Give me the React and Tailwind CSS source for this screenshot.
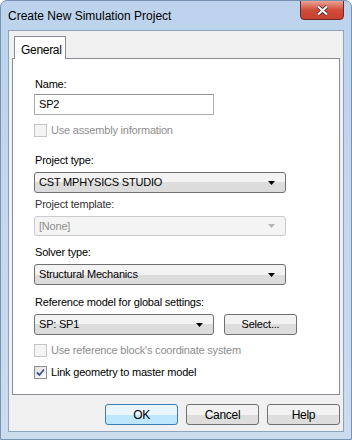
import React from 'react';

const font = { fontFamily: '"Liberation Sans", Arial, sans-serif' };

const Arrow = ({ disabled }) => (
    <svg width="7" height="4" viewBox="0 0 7 4" className="shrink-0">
        <path d="M0 0 H7 L3.5 4 Z" fill={disabled ? '#b5b5b5' : '#000'} />
    </svg>
);

const Combo = ({ value, className = '', disabled }) =>
    disabled ? (
        <div className={`flex items-center justify-between h-[20px] pl-[4px] pr-[10px] border border-[#c9cbcd] rounded-[3px] bg-[#f4f4f4] text-[#8d8d8d] ${className}`}>
            <span>{value}</span>
            <Arrow disabled />
        </div>
    ) : (
        <div className={`flex items-center justify-between h-[21px] pl-[4px] pr-[10px] border border-[#707070] rounded-[3px] bg-gradient-to-b from-[#f3f3f3] from-50% to-[#dcdcdc] to-50% text-black ${className}`}>
            <span>{value}</span>
            <Arrow />
        </div>
    );

const Checkbox = ({ label, checked, disabled }) => (
    <div className="flex items-center h-[16px]">
        <div className={`w-[13px] h-[13px] border flex items-center justify-center ${disabled ? 'border-[#c4c4c4] bg-[#f4f4f4]' : 'border-[#8e8f8f] bg-gradient-to-br from-[#dedede] to-[#ffffff]'}`}>
            {checked && (
                <svg width="9" height="9" viewBox="0 0 9 9">
                    <path d="M1 4.5 L3.5 7 L8 1.5" stroke="#3d4f8a" strokeWidth="1.8" fill="none" />
                </svg>
            )}
        </div>
        <span className={`ml-[4px] ${disabled ? 'text-[#8d8d8d]' : 'text-black'}`}>{label}</span>
    </div>
);

const Button = ({ children, primary, className = '' }) => (
    <div className={`h-[21px] w-[73px] flex items-center justify-center rounded-[3px] border ${primary ? 'border-[#3c7fb1] bg-gradient-to-b from-[#eaf6fd] from-50% to-[#bee6fd] to-50%' : 'border-[#707070] bg-gradient-to-b from-[#f2f2f2] from-50% to-[#dddddd] to-50%'} ${className}`}>
        {children}
    </div>
);

const Label = ({ children, className = '' }) => (
    <div className={`h-[16px] leading-[16px] pl-[1px] ${className}`}>{children}</div>
);

export default function App() {
    return (
        <div style={font} className="w-[352px] h-[440px] text-[11px] tracking-[-0.2px] text-black bg-gradient-to-b from-[#bdd3ed] to-[#cbdcef] border border-[#7892b2] rounded-t-[7px] flex flex-col overflow-hidden">
            {/* title bar */}
            <div className="h-[29px] flex items-start relative">
                <span className="ml-[7px] mt-[6px] text-[12px] tracking-normal text-black">Create New Simulation Project</span>
                <div className="absolute right-[7px] top-[-1px] w-[44px] h-[20px] rounded-b-[4px] border border-[#6d2a26] bg-gradient-to-b from-[#e8a394] via-[#cf4b3a] to-[#c8412f] flex items-center justify-center">
                    <svg width="13" height="11" viewBox="0 0 13 11">
                        <path d="M2 1.5 L11 9.5 M11 1.5 L2 9.5" stroke="#3a2020" strokeWidth="3.6" />
                        <path d="M2 1.5 L11 9.5 M11 1.5 L2 9.5" stroke="#ffffff" strokeWidth="2.2" />
                    </svg>
                </div>
            </div>

            {/* client area */}
            <div className="mx-[7px] mb-[7px] flex-1 bg-[#f0f0f0] border border-[#8da4bf] flex flex-col px-[3px]">
                {/* tab */}
                <div className="mt-[5px] flex">
                    <div className="ml-[2px] w-[52px] h-[23px] bg-white border border-[#898c95] border-b-0 pl-[6px] pt-[4px] text-[12px] tracking-[-0.3px] relative z-10 -mb-[1px]">General</div>
                </div>
                <div className="h-[337px] bg-white border border-[#898c95] pt-[17px] pl-[21px] flex flex-col">
                    <Label>Name:</Label>
                    <div className="mt-[2px] w-[180px] h-[21px] border border-[#abadb3] border-t-[#8f939c] bg-white pl-[4px] flex items-center">SP2</div>
                    <div className="mt-[7px]"><Checkbox label="Use assembly information" disabled /></div>

                    <Label className="mt-[14px]">Project type:</Label>
                    <Combo className="mt-[4px] w-[252px]" value="CST MPHYSICS STUDIO" />
                    <Label className="mt-[3px] text-[#333]">Project template:</Label>
                    <Combo className="mt-[4px] w-[252px]" value="[None]" disabled />

                    <Label className="mt-[8px]">Solver type:</Label>
                    <Combo className="mt-[4px] w-[252px]" value="Structural Mechanics" />
                    <Label className="mt-[9px]">Reference model for global settings:</Label>
                    <div className="mt-[4px] flex items-center">
                        <Combo className="w-[180px]" value="SP: SP1" />
                        <Button className="ml-[10px] w-[62px]">Select...</Button>
                    </div>
                    <div className="mt-[7px]"><Checkbox label="Use reference block's coordinate system" disabled /></div>
                    <div className="mt-[6px]"><Checkbox label="Link geometry to master model" checked /></div>
                </div>

                {/* buttons */}
                <div className="mt-[9px] flex justify-end gap-[8px] text-[12px] tracking-[-0.3px]">
                    <Button primary>OK</Button>
                    <Button>Cancel</Button>
                    <Button>Help</Button>
                </div>
            </div>
        </div>
    );
}
